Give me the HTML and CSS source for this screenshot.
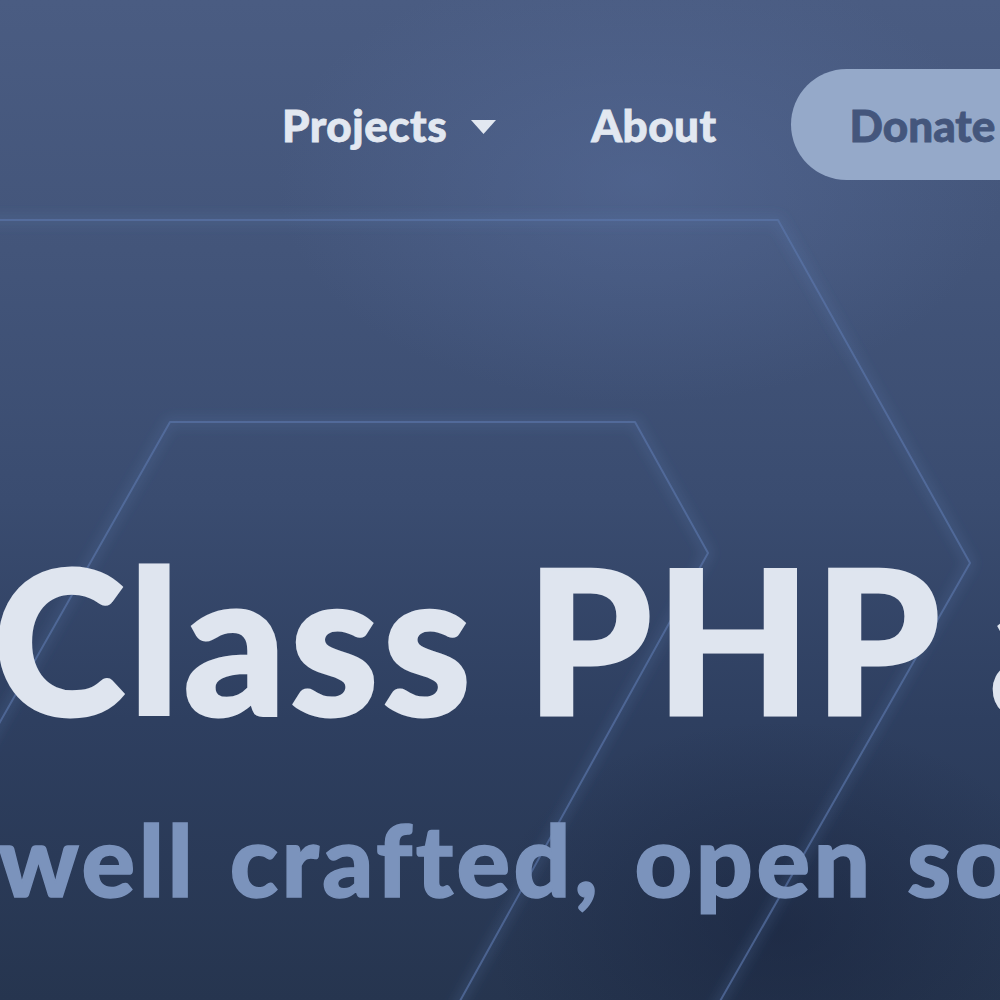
FILE: index.html
```html
<!DOCTYPE html>
<html lang="en">
<head>
<meta charset="utf-8">
<title>Class PHP</title>
<link rel="stylesheet" href="styles.css">
</head>
<body>
<div class="page">
  <svg class="hexes" width="1000" height="1000" viewBox="0 0 1000 1000" aria-hidden="true">
    <defs>
      <filter id="glow" x="-20%" y="-20%" width="140%" height="140%">
        <feGaussianBlur stdDeviation="6"/>
      </filter>
    </defs>
    <g class="glow" filter="url(#glow)">
      <path d="M-20 220 L778 220 L970 563 L715 1010"/>
      <path d="M-30 775 L170 422 L635 422 L708 553 L455 1010"/>
    </g>
    <g class="line">
      <path d="M-20 220 L778 220 L970 563 L715 1010"/>
      <path d="M-30 775 L170 422 L635 422 L708 553 L455 1010"/>
    </g>
  </svg>
  <header class="nav">
    <a class="nav-link" href="#">Projects <svg class="caret" width="25" height="14" viewBox="0 0 25 14"><path d="M0 0 H25 L12.5 14 Z"/></svg></a>
    <a class="nav-link about" href="#">About</a>
    <a class="donate" href="#">Donate</a>
  </header>
  <main class="hero">
    <h1 class="title">Class PHP applications</h1>
    <p class="subtitle">well crafted, open source</p>
  </main>
</div>
</body>
</html>
```
FILE: styles.css
```css
html, body {
  margin: 0;
  padding: 0;
}
body {
  width: 1000px;
  height: 1000px;
  overflow: hidden;
  font-family: "Lato", "Open Sans", sans-serif;
  background: #2b3b5a;
}
.page {
  position: relative;
  width: 1000px;
  height: 1000px;
  overflow: hidden;
  background:
    radial-gradient(ellipse 520px 320px at 640px 180px, rgba(90, 112, 160, 0.45), rgba(90, 112, 160, 0) 70%),
    radial-gradient(ellipse 420px 300px at 780px 930px, rgba(20, 30, 55, 0.45), rgba(20, 30, 55, 0) 70%),
    linear-gradient(180deg, #4a5c82 0%, #43557a 25%, #3a4c70 50%, #2e3f60 72%, #26354f 100%);
}
.hexes {
  position: absolute;
  left: 0;
  top: 0;
  z-index: 0;
}
.hexes path {
  fill: none;
  stroke-linejoin: round;
}
.hexes .glow path {
  stroke: #5f7fb6;
  stroke-width: 8;
  opacity: 0.25;
}
.hexes .line path {
  stroke: #5a77aa;
  stroke-width: 2;
  opacity: 0.65;
}
.nav {
  position: relative;
  z-index: 1;
  display: flex;
  align-items: center;
  padding: 69px 0 0 282px;
  height: 111px;
  white-space: nowrap;
}
.nav-link {
  display: flex;
  align-items: center;
  color: #e2e8f1;
  font-weight: 900;
  font-size: 44px;
  letter-spacing: 0.5px;
  -webkit-text-stroke: 0.8px #e2e8f1;
  text-decoration: none;
}
.caret {
  margin-left: 24px;
  margin-top: 4px;
  fill: #e2e8f1;
}
.about {
  margin-left: 95px;
}
.donate {
  display: flex;
  align-items: center;
  margin-left: 74px;
  height: 111px;
  padding: 0 60px 0 59px;
  border-radius: 56px;
  background: #95a9c9;
  color: #44567c;
  font-weight: 900;
  font-size: 44px;
  letter-spacing: 0;
  -webkit-text-stroke: 0.8px #44567c;
  text-decoration: none;
  flex-shrink: 0;
}
.hero {
  position: relative;
  z-index: 1;
}
.title {
  margin: 358px 0 0 -7px;
  font-size: 200px;
  line-height: 200px;
  font-weight: 900;
  color: #dfe5ef;
  -webkit-text-stroke: 3px #dfe5ef;
  white-space: nowrap;
  letter-spacing: 4px;
}
.subtitle {
  margin: 71px 0 0 -2px;
  font-size: 100px;
  line-height: 99px;
  font-weight: 900;
  color: #7b93bc;
  -webkit-text-stroke: 1.5px #7b93bc;
  white-space: nowrap;
  letter-spacing: 3.5px;
  word-spacing: 6px;
}
```
